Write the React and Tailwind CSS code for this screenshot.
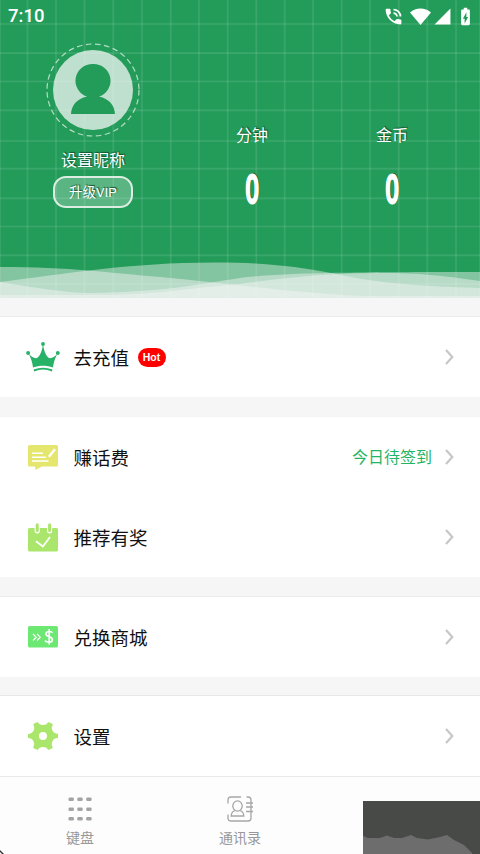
import React from 'react';
import { MdPhoneInTalk, MdBatteryChargingFull, MdSignalCellular4Bar } from 'react-icons/md';

const GRID_X = [0, 27.5, 56, 84.5, 113.3, 142, 170.7, 199, 227.7, 256.3, 284.7, 313, 341.7, 370, 398.7, 427.3, 456, 480];
const GRID_Y = [24, 53.2, 81.5, 110.3, 141, 168.7, 198.3, 226.5, 255.3, 284];

const WAVES = [
  'M0 267C70 267 110 273 160 277S280 292 360 296H480V298H0Z',
  'M0 282C65 274 130 262.5 215 262.5C290 262.5 325 272 356 278S440 287 480 288V298H0Z',
  'M0 282C35 288 70 293 90 293C165 292 200 284 240 278C280 273 340 272 480 272V298H0Z',
  'M0 295H110C160 294 190 288 240 284C290 277 330 273 385 273C425 273 450 277 480 281V298H0Z',
];

function HeaderArt() {
  return (
    <svg className="absolute inset-0" width="480" height="298" viewBox="0 0 480 298" fill="none">
      <g stroke="#fff" strokeOpacity="0.11" strokeWidth="1.7">
        {GRID_X.map((x) => <path key={x} d={`M${x} 0V298`} />)}
        {GRID_Y.map((y) => <path key={y} d={`M0 ${y}H480`} />)}
      </g>
      {WAVES.map((d) => <path key={d} d={d} fill="#f6f6f6" fillOpacity="0.46" />)}
    </svg>
  );
}

function Avatar() {
  return (
    <svg width="94" height="94" viewBox="0 0 94 94" fill="none">
      <circle cx="47" cy="47" r="46" stroke="#b4dcc5" strokeWidth="1.2" strokeDasharray="5.6 3.5" />
      <circle cx="47" cy="47" r="40" fill="#f0f5f2" fillOpacity="0.77" />
      <path d="M47 21a17 16.7 0 0 0-6 32.500C31 55.500 25.300 62.500 25 71h44c-.3-8.500-6-15.500-16-17.500A17 16.700 0 0 0 47 21Z" fill="#239c5a" />
    </svg>
  );
}

function WifiIcon() {
  return (
    <svg width="21" height="17" viewBox="0 0 21 17" fill="#fff">
      <path d="M0 4.500C6-.8 15-.8 21 4.500L10.500 17Z" />
    </svg>
  );
}

function CrownIcon() {
  return (
    <svg width="34" height="30" viewBox="0 0 34 30" fill="#27b268">
      <circle cx="17" cy="2" r="1.900" />
      <circle cx="2.100" cy="11" r="2" />
      <circle cx="31.800" cy="11" r="2" />
      <path d="M2.800 12C6 15.500 9.500 17.200 11.800 15.500C14.500 13 16.200 8 17 2.500C17.800 8 19.500 13 22.200 15.500C24.500 17.200 28 15.500 31.200 12C29 16.500 27.500 20.500 27 25.500C20.500 23.300 13.500 23.300 7 25.500C6.500 20.500 5 16.500 2.800 12Z" />
      <path d="M7.900 28.500C14 26 20 26 26.200 28.500" fill="none" stroke="#27b268" strokeWidth="1.900" />
    </svg>
  );
}

function NoteIcon() {
  return (
    <svg width="30" height="25" viewBox="0 0 30 25">
      <path d="M1.500 0h27Q30 0 30 1.500v18.400q0 1.500-1.500 1.500H14L7.200 25v-3.600H1.500Q0 21.400 0 19.900V1.500Q0 0 1.500 0Z" fill="#e5e66e" />
      <g stroke="#fff" strokeWidth="1.600" fill="none">
        <path d="M4 8.200h11M4 12.200h14M4 16h16.500" />
        <path d="M20.800 11.800L27 4.300" strokeWidth="2.300" />
      </g>
    </svg>
  );
}

function CalendarIcon() {
  return (
    <svg width="30" height="29" viewBox="0 0 30 29" fill="none">
      <rect y="5" width="30" height="23.500" rx="1.500" fill="#abe66c" />
      <g strokeLinecap="round">
        <path d="M9.200 2.200v5.600M21.600 2.200v5.600" stroke="#fff" strokeWidth="5.200" />
        <path d="M9.200 1.800v5.700M21.600 1.800v5.700" stroke="#abe66c" strokeWidth="3" />
      </g>
      <path d="M8 18.200l6.900 5.300L22 14" stroke="#fff" strokeWidth="1.800" />
    </svg>
  );
}

function CouponIcon() {
  return (
    <svg width="30" height="22" viewBox="0 0 30 22" fill="none" stroke="#fff">
      <rect width="30" height="21.500" rx="1.500" fill="#6ce873" stroke="none" />
      <path d="M5 8l3.200 3.200L5 14.500M9 8l3.200 3.200L9 14.500" strokeWidth="1.200" />
      <path d="M24.500 6.700C23.500 5.100 18 4.700 18 7.900C18 11.500 24.300 9.700 24.300 13.700C24.300 17 18.300 16.700 17 14.500M21.200 3v15.500" strokeWidth="1.700" />
    </svg>
  );
}

function GearIcon() {
  return (
    <svg width="30" height="28" viewBox="0 0 30 28">
      <path fillRule="evenodd" fill="#abe66c" d="M6 1.500L10 0q.8 3 5 3t5-3l4 1.500.8 1.300q-2 3-.3 6t5.500 3.100v4.200q-3.800-.2-5.500 3.100t.3 6L24 26.500 20 28q-.8-3-5-3t-5 3L6 26.500 5.200 25.200q2-3 .3-6t-5.500-3.100v-4.200q3.800.2 5.500-3.100t-.3-6ZM15 10a4 4 0 1 0 0 8a4 4 0 0 0 0-8Z" />
    </svg>
  );
}

function Chevron() {
  return (
    <svg width="9" height="16" viewBox="0 0 9 16" fill="none" stroke="#c7c7c7" strokeWidth="2.200">
      <path d="M1 1L7.300 8L1 15" />
    </svg>
  );
}

function KeypadIcon() {
  return (
    <svg width="24" height="25" viewBox="0 0 24 25" fill="#a3a3a3">
      {[0.5, 10.5, 20].map((y) => [0.5, 9.3, 18.2].map((x) => (
        <rect key={`${x}-${y}`} x={x} y={y} width="5.400" height="3.600" rx="1.300" />
      )))}
    </svg>
  );
}

function ContactsIcon() {
  return (
    <svg width="27" height="26" viewBox="0 0 27 26" fill="none" stroke="#a6a6a6" strokeWidth="1.300">
      <path d="M1 7.500V4Q1 1 4 1H14M19.500 1H21Q24 1 24 4V22Q24 25 21 25H4Q1 25 1 22V18.500" />
      <path d="M19 7h7M19 11h7M19 15.500h7" />
      <ellipse cx="10.500" cy="10" rx="4.700" ry="5.200" />
      <path d="M8 14.500Q4.500 15.500 4.200 20H16.800Q16.500 15.500 13 14.500" />
    </svg>
  );
}

function Row({ icon, label, hot, note }) {
  return (
    <div className="flex h-20 items-center bg-white pr-[26px] pl-[27px]">
      <div className="flex w-[34px] justify-center pr-[2px]"><div className="shrink-0">{icon}</div></div>
      <span className="mb-px ml-[12.500px] text-[18.500px] leading-7 text-[#111]">{label}</span>
      {hot && (
        <span className="ml-[8.500px] h-[19px] w-7 rounded-full bg-[#f00] text-center font-['Liberation_Sans'] text-[10.500px] leading-[19px] font-bold text-white">Hot</span>
      )}
      <div className="ml-auto flex items-center gap-[13px]">
        {note && <span className="mb-[2px] text-[16px] text-[#1fb565]">{note}</span>}
        <Chevron />
      </div>
    </div>
  );
}

function Stat({ label }) {
  return (
    <div className="flex w-[140px] flex-col items-center pt-[122px]">
      <span className="text-base leading-6 [text-shadow:1px_-1px_1px_#14502f]">{label}</span>
      <span className="mt-[21px] scale-x-[0.56] font-['Liberation_Sans'] text-[40px] leading-[44px] [-webkit-text-stroke:3px_#fff] [text-shadow:1.500px_0_#fff,-1.500px_0_#fff,2px_-2px_1px_#14502f]">0</span>
    </div>
  );
}

export default function App() {
  return (
    <div className="relative h-[854px] w-[480px] overflow-hidden bg-[#f6f6f6] font-['Noto_Sans_CJK_SC',sans-serif]">
      <header className="relative h-[298px] bg-[#239c5a] text-white">
        <HeaderArt />
        <div className="absolute inset-x-0 top-0 flex h-8 items-center justify-between pr-1 pl-2">
          <span className="pt-[2px] font-['Roboto'] text-[18.500px] font-medium">7:10</span>
          <div className="flex items-center">
            <MdPhoneInTalk size={21} />
            <span className="ml-[6px]"><WifiIcon /></span>
            <MdSignalCellular4Bar size={19} className="ml-[2px]" />
            <MdBatteryChargingFull size={21} className="ml-[3px]" />
          </div>
        </div>
        <div className="relative flex">
          <div className="flex w-[182px] flex-col items-center pt-[43px] pl-1">
            <Avatar />
            <span className="mt-[10px] text-base leading-6 [text-shadow:1px_-1px_1px_#14502f]">设置昵称</span>
            <button className="mt-[5px] h-8 w-20 rounded-[13px] border-2 border-[#dceee4] bg-white/25 font-[Roboto,'Noto_Sans_CJK_SC',sans-serif] text-[13.500px] leading-7 [text-shadow:1px_-1px_1px_#14502f]">升级VIP</button>
          </div>
          <Stat label="分钟" />
          <Stat label="金币" />
        </div>
      </header>

      <main className="flex flex-col gap-[19px] pt-[18px]">
        <section className="border-t border-[#ececec]"><Row icon={<CrownIcon />} label="去充值" hot /></section>
        <section className="border-t border-[#f4f4f4]">
          <Row icon={<NoteIcon />} label="赚话费" note="今日待签到" />
          <Row icon={<CalendarIcon />} label="推荐有奖" />
        </section>
        <section className="border-t border-[#ececec]"><Row icon={<CouponIcon />} label="兑换商城" /></section>
        <section className="-mt-px border-y border-[#e8e8e8]"><Row icon={<GearIcon />} label="设置" /></section>
      </main>

      <nav className="flex h-[78px] bg-[#fdfdfd] text-[14px] text-[#989898]">
        <div className="flex w-40 flex-col items-center pt-5">
          <KeypadIcon />
          <span className="mt-[5px] leading-5">键盘</span>
        </div>
        <div className="flex w-40 flex-col items-center pt-[19px]">
          <ContactsIcon />
          <span className="mt-[5px] leading-5">通讯录</span>
        </div>
      </nav>

      <svg className="absolute right-0 bottom-0" width="117" height="53" viewBox="0 0 117 53">
        <path fill="#484a48" d="M0 0H117V53H0Z" />
        <path fill="#6d6d6d" d="M0 35L5 37H17L24 34.500L31 37H39L48 34L54 37L65 38.500L77 36L84 34L91 39L101 44L109 52V53H0Z" />
      </svg>
      <svg className="absolute bottom-0 left-0" width="4" height="4" viewBox="0 0 4 4"><path d="M0 0L4 4H0Z" fill="#333" /><path d="M0 2L2 4H0Z" fill="#fff" /></svg>
    </div>
  );
}
